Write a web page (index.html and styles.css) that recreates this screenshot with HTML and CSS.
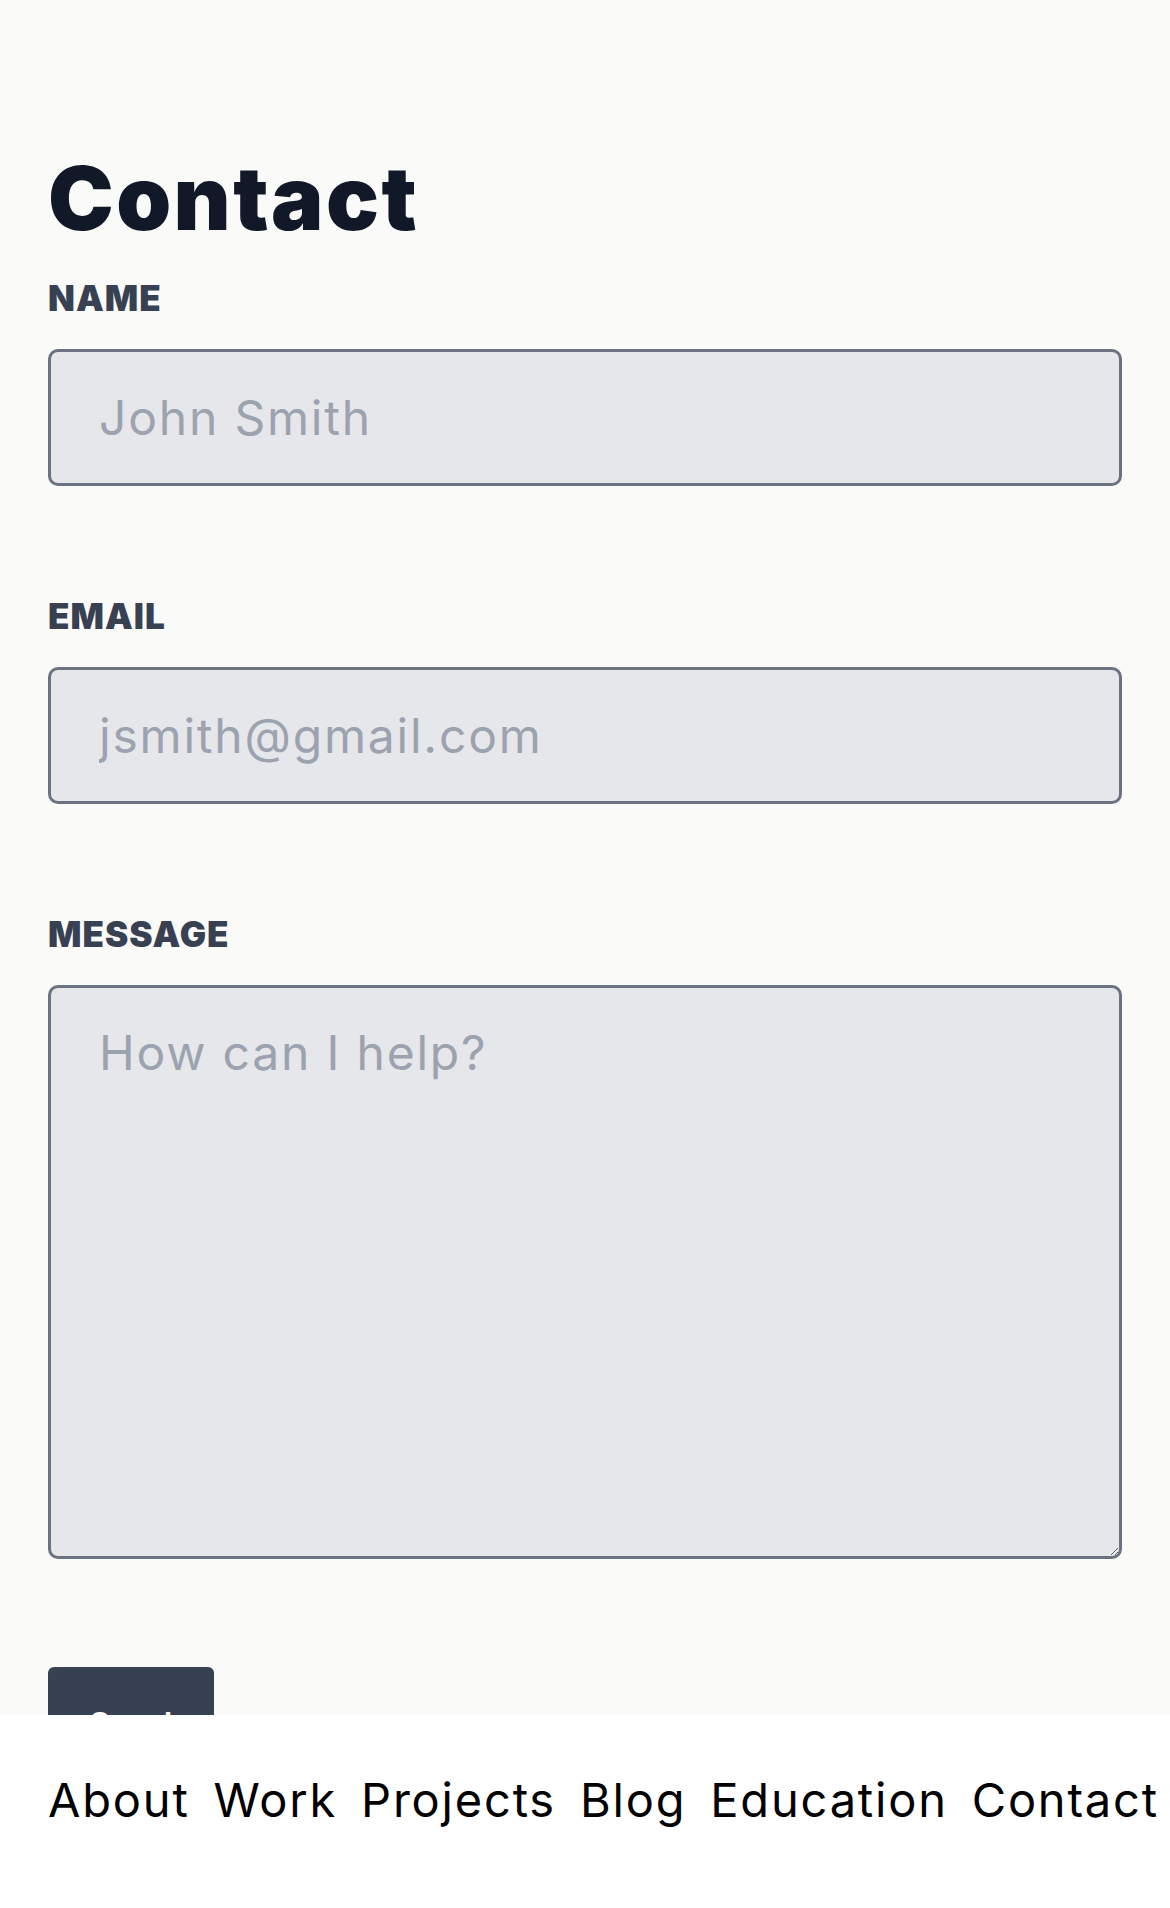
FILE: index.html
```html
<!DOCTYPE html>
<html lang="en">
<head>
<meta charset="utf-8">
<title>Contact</title>
<link rel="stylesheet" href="styles.css">
</head>
<body>
<main class="page">
  <h1 class="title">Contact</h1>
  <form class="form">
    <div class="field">
      <label class="label" for="name">Name</label>
      <input class="input" id="name" type="text" placeholder="John Smith">
    </div>
    <div class="field">
      <label class="label" for="email">Email</label>
      <input class="input" id="email" type="email" placeholder="jsmith@gmail.com">
    </div>
    <div class="field">
      <label class="label" for="message">Message</label>
      <textarea class="textarea" id="message" placeholder="How can I help?"></textarea>
    </div>
    <button class="send" type="button">Send</button>
  </form>
</main>
<footer class="footer">
  <nav class="nav">
    <a class="nav-link" href="#">About</a>
    <a class="nav-link" href="#">Work</a>
    <a class="nav-link" href="#">Projects</a>
    <a class="nav-link" href="#">Blog</a>
    <a class="nav-link" href="#">Education</a>
    <a class="nav-link" href="#">Contact</a>
  </nav>
</footer>
</body>
</html>
```

FILE: styles.css
```css
* { box-sizing: border-box; }

html, body {
  margin: 0;
  padding: 0;
}

body {
  background: #fafaf9;
  font-family: Inter, "Noto Sans", "DejaVu Sans", sans-serif;
  color: #111827;
  min-height: 1908px;
}

.page {
  padding: 154px 48px 300px 48px;
}

.title {
  margin: 0;
  font-size: 88px;
  line-height: 88px;
  font-weight: 900;
  color: #111827;
  letter-spacing: 2.4px;
}

.form {
  display: flex;
  flex-direction: column;
  margin-top: 39px;
}

.field {
  display: flex;
  flex-direction: column;
  gap: 33px;
  margin-bottom: 113px;
}

.field:last-of-type {
  margin-bottom: 108px;
}

.label {
  font-size: 35px;
  line-height: 35px;
  font-weight: 900;
  text-transform: uppercase;
  color: #374151;
  letter-spacing: 1px;
}

.input,
.textarea {
  width: 100%;
  background: #e5e7eb;
  border: 3px solid #6b7280;
  border-radius: 10px;
  font-family: Inter, "Noto Sans", "DejaVu Sans", sans-serif;
  font-size: 48px;
  letter-spacing: 1.8px;
  color: #111827;
  outline: none;
  margin: 0;
}

.input {
  height: 137px;
  padding: 0 48px;
}

.textarea {
  height: 574px;
  padding: 35px 48px;
  display: block;
}

.input::placeholder,
.textarea::placeholder {
  color: #9ca3af;
  opacity: 1;
}

.send {
  align-self: flex-start;
  background: #374151;
  color: #ffffff;
  border: none;
  border-radius: 6px;
  font-family: Inter, "Noto Sans", sans-serif;
  font-size: 33px;
  font-weight: 600;
  letter-spacing: 0.5px;
  padding: 37px 41px;
  line-height: normal;
}

.footer {
  position: fixed;
  left: 0;
  right: 0;
  bottom: 0;
  height: 193px;
  background: #ffffff;
  padding: 56px 0 0 48px;
}

.nav {
  display: flex;
  gap: 24px;
  white-space: nowrap;
}

.nav-link {
  font-size: 47px;
  line-height: 57px;
  letter-spacing: 1.8px;
  color: #000000;
  text-decoration: none;
}
```
